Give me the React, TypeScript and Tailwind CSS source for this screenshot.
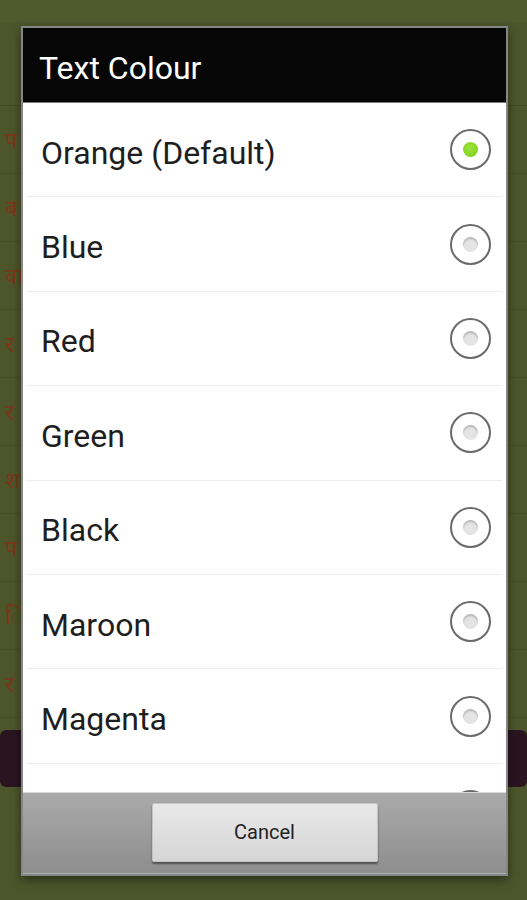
import React from 'react';

const colours = ['Orange (Default)', 'Blue', 'Red', 'Green', 'Black', 'Maroon', 'Magenta', ''];

const behindMarks = ['प', 'ब', 'वा', 'र', 'र', 'श', 'प', 'ि', 'र'];

function Radio({ checked }: { checked: boolean }) {
  return (
    <div className="w-[41px] h-[41px] rounded-full border-2 border-[#6a6a6a] bg-white flex items-center justify-center shrink-0">
      {checked ? (
        <div className="w-[15px] h-[15px] rounded-full bg-[radial-gradient(circle_at_45%_40%,#9be33a,#7ccc16)]" />
      ) : (
        <div className="w-[15px] h-[15px] rounded-full bg-[#e4e4e4] shadow-[inset_0_2px_2px_rgba(0,0,0,0.2)]" />
      )}
    </div>
  );
}

export default function App() {
  return (
    <div className="relative w-[527px] h-[900px] overflow-hidden bg-[#4d562b] font-['Roboto','Liberation_Sans',sans-serif]">
      {/* dimmed app behind the dialog */}
      <div className="flex flex-col">
        <div className="h-[22px] bg-[#505a2d]" />
        <div className="h-[84px] border-b border-[#434b24]" />
        {behindMarks.map((m, i) => (
          <div
            key={i}
            className="h-[68px] flex items-center pl-[5px] border-b border-[#465026] text-[22px] text-[#7e361a] font-['Noto_Sans','DejaVu_Sans',sans-serif]"
          >
            {m}
          </div>
        ))}
        <div className="mt-[12px] h-[57px] bg-[#2a1420] rounded-[6px]" />
      </div>

      {/* dialog */}
      <div className="absolute left-[21px] top-[26px] w-[487px] h-[850px] border-2 border-[#858585] bg-white shadow-[0_4px_10px_rgba(0,0,0,0.45)] flex flex-col">
        <div className="h-[75px] bg-[#060606] border-b border-[#777] flex items-center pl-[16px] pt-[6px] shrink-0">
          <span className="text-[32px] text-white leading-none">Text Colour</span>
        </div>

        <div className="h-[689px] overflow-hidden flex flex-col shrink-0">
          {colours.map((c, i) => (
            <div key={i} className="h-[94.4px] shrink-0 flex flex-col px-[4px]">
              <div className="flex-1 flex items-center justify-between pl-[14px] pr-[11px]">
                <span className="text-[32px] text-[#1e1e1e] leading-none pt-[6px]">{c}</span>
                <Radio checked={i === 0} />
              </div>
              <div className="h-px bg-[#ececec]" />
            </div>
          ))}
        </div>

        <div className="flex-1 border-t border-[#d8d8d8] border-b border-b-[#b0b0b0] bg-[linear-gradient(#aaaaaa,#8e8e8e)] flex items-center justify-center">
          <button className="w-[226px] h-[59px] mt-[-2px] rounded-[2px] border border-[#c4c4c4] bg-[linear-gradient(#e8e8e8,#d5d5d5)] shadow-[0_2px_2px_rgba(0,0,0,0.45)] text-[20px] text-[#222]">
            Cancel
          </button>
        </div>
      </div>
    </div>
  );
}
